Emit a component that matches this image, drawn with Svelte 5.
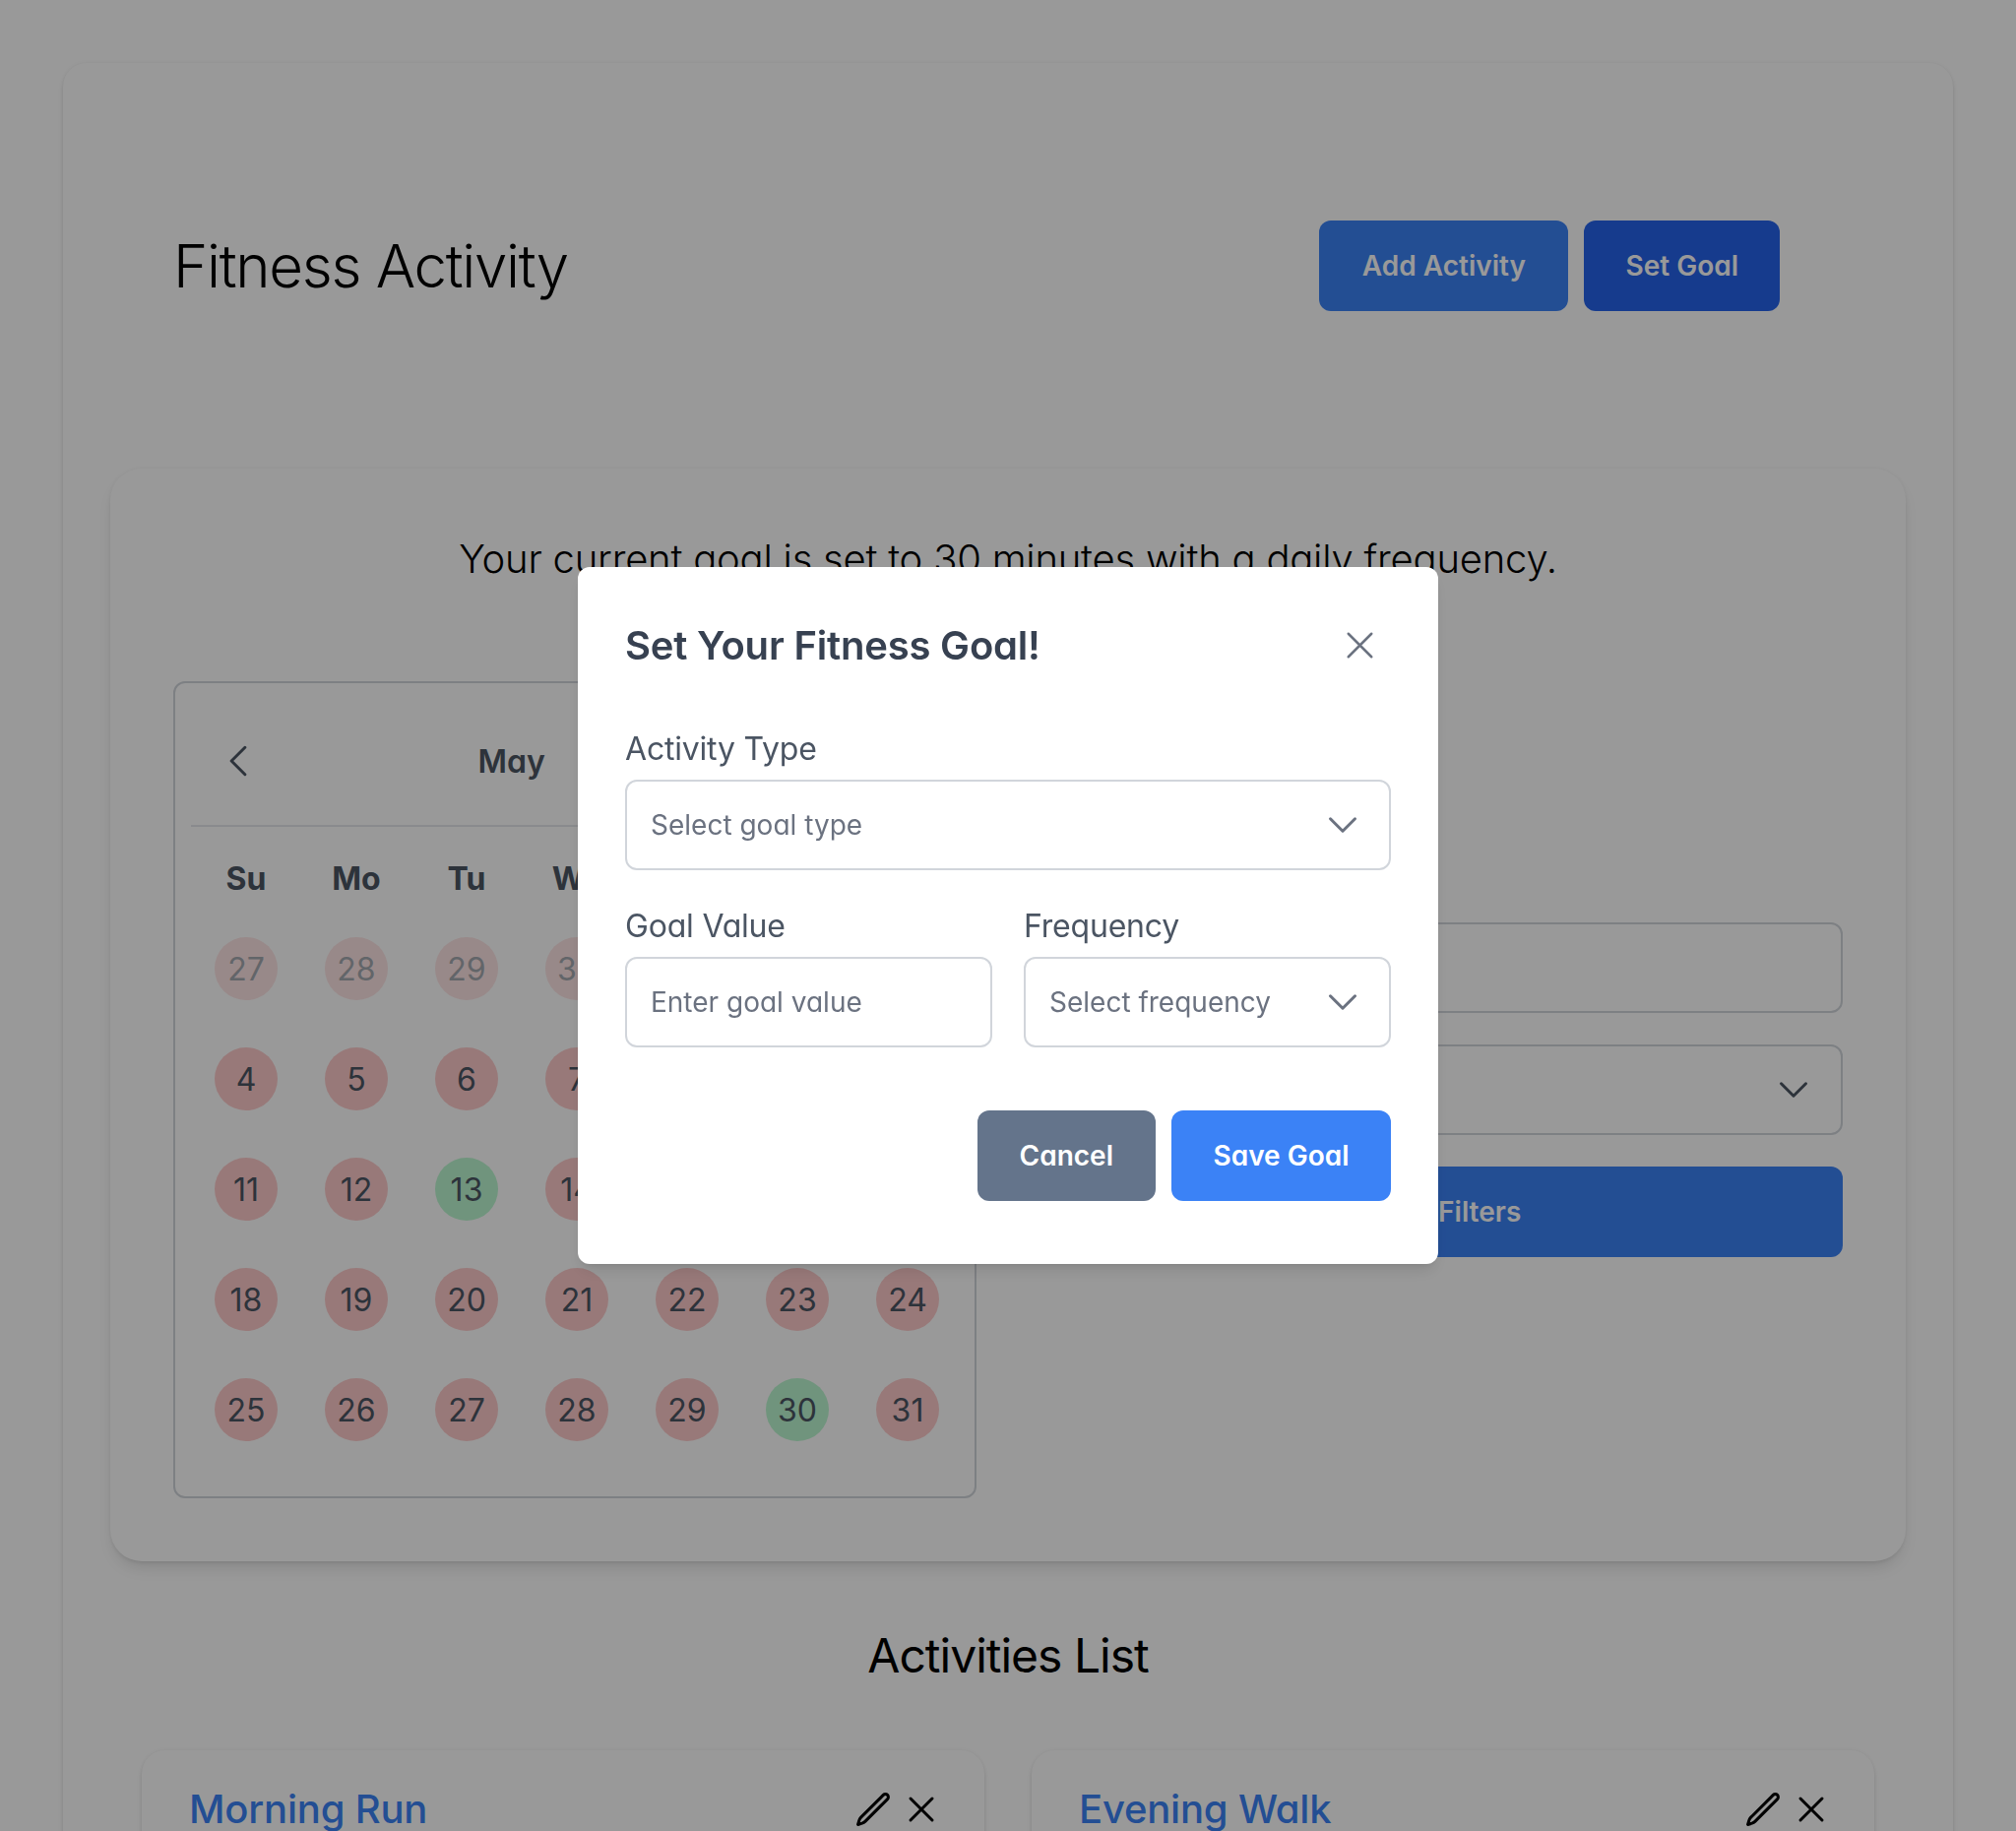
<script lang="ts">
	const weekdays = ['Su', 'Mo', 'Tu', 'We', 'Th', 'Fr', 'Sa'];
	const doneDays = [13, 30];

	const days = [
		...[27, 28, 29, 30].map((n) => ({ n, muted: true, done: false })),
		...Array.from({ length: 31 }, (_, i) => ({
			n: i + 1,
			muted: false,
			done: doneDays.includes(i + 1)
		}))
	];

	const activities = ['Morning Run', 'Evening Walk'];
</script>

<div class="page">
	<main class="shell">
		<header class="top">
			<h1>Fitness Activity</h1>
			<div class="top-actions">
				<button class="btn btn-primary">Add Activity</button>
				<button class="btn btn-dark">Set Goal</button>
			</div>
		</header>

		<section class="panel">
			<p class="goal-line">Your current goal is set to 30 minutes with a daily frequency.</p>
			<div class="panel-grid">
				<div class="calendar">
					<div class="cal-nav">
						<svg class="cal-arrow" viewBox="0 0 24 24" fill="none" stroke="currentColor" stroke-width="1.6" stroke-linecap="round" stroke-linejoin="round"><path d="M15.75 19.5 8.25 12l7.5-7.5" /></svg>
						<div class="cal-month">
							<span>May</span>
							<span>2024</span>
						</div>
						<svg class="cal-arrow" viewBox="0 0 24 24" fill="none" stroke="currentColor" stroke-width="1.6" stroke-linecap="round" stroke-linejoin="round"><path d="m8.25 4.5 7.5 7.5-7.5 7.5" /></svg>
					</div>
					<div class="cal-grid">
						{#each weekdays as d}
							<div class="cal-head">{d}</div>
						{/each}
						{#each days as day}
							<div class="cal-cell">
								<span class="day" class:muted={day.muted} class:done={day.done}>{day.n}</span>
							</div>
						{/each}
					</div>
				</div>

				<div class="filters">
					<div class="field-box"></div>
					<div class="field-box">
						<svg class="chev" viewBox="0 0 24 24" fill="none" stroke="currentColor" stroke-width="1.8" stroke-linecap="round" stroke-linejoin="round"><path d="m19.5 8.25-7.5 7.5-7.5-7.5" /></svg>
					</div>
					<button class="btn btn-primary wide">Apply Filters</button>
				</div>
			</div>
		</section>

		<h2 class="list-title">Activities List</h2>
		<div class="activity-grid">
			{#each activities as name}
				<article class="activity">
					<h3>{name}</h3>
					<div class="activity-icons">
						<svg class="icon-edit" viewBox="0 0 24 24" fill="none" stroke="currentColor" stroke-width="1.9" stroke-linecap="round" stroke-linejoin="round"><path d="m16.862 4.487 1.687-1.688a1.875 1.875 0 1 1 2.652 2.652L6.832 19.82a4.5 4.5 0 0 1-1.897 1.13l-2.685.8.8-2.685a4.5 4.5 0 0 1 1.13-1.897L16.863 4.487Z" /></svg>
						<svg class="icon-remove" viewBox="0 0 24 24" fill="none" stroke="currentColor" stroke-width="1.64" stroke-linecap="round" stroke-linejoin="round"><path d="M6 18 18 6M6 6l12 12" /></svg>
					</div>
				</article>
			{/each}
		</div>
	</main>

	<div class="overlay">
		<div class="modal">
			<div class="modal-head">
				<h2>Set Your Fitness Goal!</h2>
				<svg class="close" viewBox="0 0 24 24" fill="none" stroke="currentColor" stroke-width="1.27" stroke-linecap="round" stroke-linejoin="round"><path d="M6 18 18 6M6 6l12 12" /></svg>
			</div>

			<label class="label" for="goal-type">Activity Type</label>
			<div class="control" id="goal-type">
				<span>Select goal type</span>
				<svg class="chev" viewBox="0 0 24 24" fill="none" stroke="currentColor" stroke-width="1.8" stroke-linecap="round" stroke-linejoin="round"><path d="m19.5 8.25-7.5 7.5-7.5-7.5" /></svg>
			</div>

			<div class="modal-row">
				<div>
					<label class="label" for="goal-value">Goal Value</label>
					<div class="control" id="goal-value"><span>Enter goal value</span></div>
				</div>
				<div>
					<label class="label" for="goal-freq">Frequency</label>
					<div class="control" id="goal-freq">
						<span>Select frequency</span>
						<svg class="chev" viewBox="0 0 24 24" fill="none" stroke="currentColor" stroke-width="1.8" stroke-linecap="round" stroke-linejoin="round"><path d="m19.5 8.25-7.5 7.5-7.5-7.5" /></svg>
					</div>
				</div>
			</div>

			<div class="modal-actions">
				<button class="btn btn-cancel">Cancel</button>
				<button class="btn btn-save">Save Goal</button>
			</div>
		</div>
	</div>
</div>

<style>
	:global(body) {
		background: #fff;
		font-family: Inter, 'Noto Sans', sans-serif;
		font-feature-settings: 'cv11';
		color: #000;
	}

	.page {
		height: 1860px;
		overflow: hidden;
		padding: 64px;
		box-sizing: border-box;
	}

	.shell {
		background: #fff;
		border-radius: 24px;
		box-shadow: 0 0 4px rgba(0, 0, 0, 0.05), 0 4px 6px -1px rgba(0, 0, 0, 0.1), 0 2px 4px -2px rgba(0, 0, 0, 0.1);
		padding: 64px 48px;
	}

	.top {
		display: flex;
		justify-content: space-between;
		align-items: center;
		margin: 96px 128px 160px 64px;
	}

	h1 {
		margin: 0;
		font-size: 60px;
		font-weight: 350;
		line-height: 1;
		letter-spacing: -1.3px;
	}

	.top-actions {
		display: flex;
		gap: 16px;
	}

	.btn {
		height: 92px;
		padding: 0 42px;
		border: 0;
		border-radius: 12px;
		color: #fff;
		font-family: inherit;
		font-feature-settings: inherit;
		font-size: 28px;
		font-weight: 600;
	}

	.btn-primary {
		background: #3b82f6;
		padding: 0 43.5px;
	}

	.btn-dark {
		background: #2563eb;
	}

	.btn-cancel {
		background: #64748b;
		padding: 0 43px;
	}

	.btn-save {
		background: #3b82f6;
		padding: 0 42.5px;
	}

	.panel {
		background: #fff;
		border-radius: 32px;
		box-shadow: 0 0 4px rgba(0, 0, 0, 0.05), 0 10px 15px -3px rgba(0, 0, 0, 0.1), 0 4px 6px -4px rgba(0, 0, 0, 0.1);
		padding: 64px;
	}

	.goal-line {
		margin: 0 0 96px;
		font-size: 40px;
		font-weight: 350;
		line-height: 56px;
		letter-spacing: -0.22px;
		text-align: center;
	}

	.panel-grid {
		display: grid;
		grid-template-columns: 816px minmax(0, 1fr);
		gap: 56px;
	}

	.calendar {
		border: 2px solid #d1d5db;
		border-radius: 12px;
		padding: 0 12px 32px 16px;
	}

	.cal-nav {
		display: flex;
		align-items: center;
		justify-content: space-between;
		box-sizing: border-box;
		height: 146px;
		padding: 14px 24px 0 26px;
		border-bottom: 2px solid #e5e7eb;
		color: #4b5563;
	}

	.cal-arrow {
		width: 44px;
		height: 44px;
	}

	.cal-month {
		display: flex;
		gap: 53px;
		font-size: 32px;
		font-weight: 600;
	}

	.cal-grid {
		display: grid;
		grid-template-columns: repeat(7, 112px);
		grid-auto-rows: 112px;
		grid-template-rows: 72px;
		margin-top: 16px;
	}

	.cal-head {
		display: flex;
		align-items: center;
		justify-content: center;
		font-size: 32px;
		font-weight: 700;
		color: #4b5563;
	}

	.cal-cell {
		display: flex;
		align-items: center;
		justify-content: center;
	}

	.day {
		width: 64px;
		height: 64px;
		border-radius: 50%;
		display: flex;
		align-items: center;
		justify-content: center;
		background: #fecaca;
		font-size: 32px;
		color: #4b5563;
	}

	.day.done {
		background: #bbf7d0;
	}

	.day.muted {
		opacity: 0.5;
	}

	.filters {
		display: flex;
		flex-direction: column;
		gap: 32px;
		padding-top: 245px;
	}

	.field-box {
		height: 92px;
		box-sizing: border-box;
		border: 2px solid #d1d5db;
		border-radius: 12px;
		display: flex;
		align-items: center;
		justify-content: flex-end;
		padding-right: 28px;
		color: #4b5563;
	}

	.chev {
		width: 40px;
		height: 40px;
		flex: none;
	}

	.wide {
		width: 100%;
	}

	.list-title {
		margin: 64px 0 64px;
		font-size: 48px;
		font-weight: 400;
		line-height: 64px;
		letter-spacing: -1px;
		text-align: center;
	}

	.activity-grid {
		display: grid;
		grid-template-columns: 1fr 1fr;
		gap: 48px;
		padding: 0 32px;
	}

	.activity {
		background: #fff;
		border-radius: 24px;
		box-shadow: 0 0 4px rgba(0, 0, 0, 0.05), 0 4px 6px -1px rgba(0, 0, 0, 0.1), 0 2px 4px -2px rgba(0, 0, 0, 0.1);
		padding: 32px 48px;
		min-height: 300px;
		display: flex;
		align-items: flex-start;
		justify-content: space-between;
	}

	.activity h3 {
		margin: 0;
		font-size: 40px;
		font-weight: 500;
		line-height: 56px;
		letter-spacing: -0.2px;
		color: #3b82f6;
	}

	.activity-icons {
		display: flex;
		gap: 8px;
		height: 56px;
		align-items: center;
		margin-right: -5.5px;
	}

	.icon-edit {
		width: 38px;
		height: 38px;
	}

	.icon-remove {
		width: 44px;
		height: 44px;
	}

	.overlay {
		position: fixed;
		inset: 0;
		background: rgba(0, 0, 0, 0.4);
		display: flex;
		align-items: center;
		justify-content: center;
	}

	.modal {
		width: 874px;
		height: 708px;
		box-sizing: border-box;
		background: #fff;
		border-radius: 12px;
		box-shadow: 0 10px 15px -3px rgba(0, 0, 0, 0.1), 0 4px 6px -4px rgba(0, 0, 0, 0.1);
		padding: 55px 48px 64px;
	}

	.modal-head {
		display: flex;
		align-items: center;
		justify-content: space-between;
		height: 48px;
		margin-bottom: 60px;
	}

	.modal-head h2 {
		margin: 0;
		font-size: 40px;
		font-weight: 600;
		letter-spacing: -0.2px;
		color: #374151;
	}

	.close {
		width: 47px;
		height: 47px;
		color: #6b7280;
		margin-right: 8px;
	}

	.label {
		display: block;
		font-size: 32px;
		line-height: 44px;
		letter-spacing: -0.2px;
		margin-bottom: 9px;
		color: #4b5563;
	}

	.control {
		height: 92px;
		box-sizing: border-box;
		border: 2px solid #d1d5db;
		border-radius: 12px;
		padding: 0 27px 0 24px;
		display: flex;
		align-items: center;
		justify-content: space-between;
		font-size: 28px;
		color: #6b7280;
	}

	.modal-row {
		display: grid;
		grid-template-columns: 1fr 1fr;
		gap: 32px;
		margin-top: 35px;
	}

	.modal-actions {
		display: flex;
		justify-content: flex-end;
		gap: 16px;
		margin-top: 64px;
	}
</style>
